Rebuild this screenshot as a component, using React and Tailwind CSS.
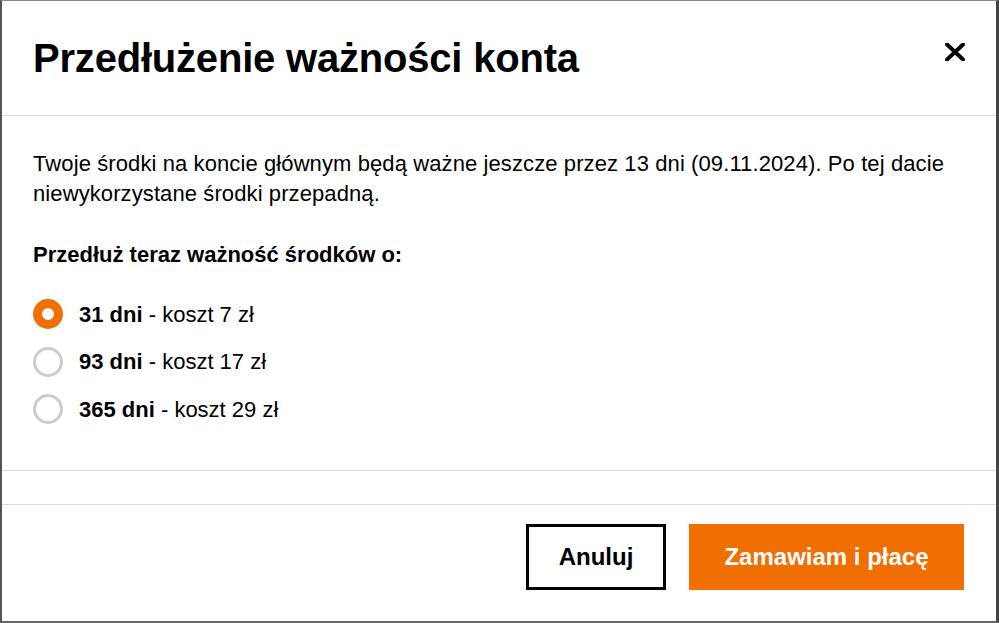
import React from "react";

const options = [
  { days: "31 dni", price: "koszt 7 zł", checked: true },
  { days: "93 dni", price: "koszt 17 zł", checked: false },
  { days: "365 dni", price: "koszt 29 zł", checked: false },
];

function Radio({ checked }) {
  if (checked) {
    return <span className="block w-[30px] h-[30px] rounded-full border-[9px] border-[#f16e00] bg-white shrink-0" />;
  }
  return <span className="block w-[30px] h-[30px] rounded-full border-[3px] border-[#cccccc] bg-white shrink-0" />;
}

export default function App() {
  return (
    <div
      className="w-[999px] h-[623px] bg-white text-black flex flex-col border-t border-t-[#8a8a8a] border-l-2 border-l-[#555] border-r-[3px] border-r-[#444] border-b-2 border-b-[#666]"
      style={{ fontFamily: '"Liberation Sans", Arial, sans-serif' }}
    >
      <div className="h-[115px] shrink-0 flex items-center justify-between pl-[31px] pr-[29px] border-b border-[#dddddd]">
        <h1 className="text-[40px] font-bold tracking-[-0.2px] leading-none">Przedłużenie ważności konta</h1>
        <button className="w-[24px] h-[24px] flex items-center justify-center -mt-[12px]">
          <svg width="20" height="18" viewBox="0 0 20 18">
            <path d="M2 1.5 L18 16.5 M18 1.5 L2 16.5" stroke="#000" strokeWidth="4" strokeLinecap="square" />
          </svg>
        </button>
      </div>

      <div className="h-[355px] shrink-0 pt-[33px] pl-[31px] pr-[31px] border-b border-[#dddddd]">
        <p className="text-[22px] leading-[30px] tracking-[0.1px]">
          Twoje środki na koncie głównym będą ważne jeszcze przez 13 dni (09.11.2024). Po tej dacie niewykorzystane środki przepadną.
        </p>
        <p className="mt-[31px] text-[22px] leading-[30px] font-bold">Przedłuż teraz ważność środków o:</p>
        <div className="mt-[29px] flex flex-col gap-[17.5px]">
          {options.map((o) => (
            <label key={o.days} className="flex items-center gap-[16px] h-[30px] text-[22px]">
              <Radio checked={o.checked} />
              <span>
                <span className="font-bold">{o.days}</span> - {o.price}
              </span>
            </label>
          ))}
        </div>
      </div>

      <div className="h-[34px] shrink-0 border-b border-[#dddddd]" />

      <div className="flex justify-end gap-[23px] pt-[19px] pr-[32px]">
        <button className="w-[140px] h-[66px] border-[3px] border-black text-[24px] font-bold bg-white">Anuluj</button>
        <button className="w-[275px] h-[66px] bg-[#f16e00] text-white text-[24px] font-bold">Zamawiam i płacę</button>
      </div>
    </div>
  );
}
